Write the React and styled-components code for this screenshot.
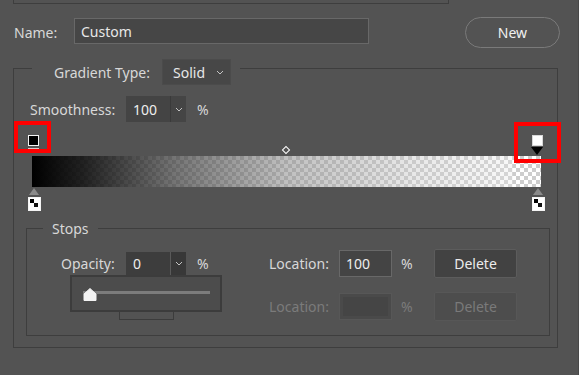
import React from 'react';
import styled, { createGlobalStyle } from 'styled-components';

const GlobalStyle = createGlobalStyle`
  * { box-sizing: border-box; }
  body {
    margin: 0;
    background: #535353;
    font-family: "Noto Sans", "Open Sans", sans-serif;
  }
`;

function Chevron() {
  return (
    <svg width="8" height="5" viewBox="0 0 8 5">
      <polyline points="1,1 4,4 7,1" fill="none" stroke="#c4c4c4" strokeWidth="1" />
    </svg>
  );
}

function NumberCombo({ value, height = 26, active, children }) {
  return (
    <Combo $h={height} $active={active}>
      <ComboValue $active={active}>{value}</ComboValue>
      <ComboArrow $active={active}>
        <Chevron />
      </ComboArrow>
      {children}
    </Combo>
  );
}

export default function App() {
  return (
    <>
      <GlobalStyle />
      <Page>
        <TopStub />
        <NameRow>
          <Label $w={60}>Name:</Label>
          <NameInput readOnly value="Custom" />
          <PillButton>New</PillButton>
        </NameRow>

        <Group>
          <TypeLegend>
            <Label $w={108}>Gradient Type:</Label>
            <Select>
              Solid
              <Chevron />
            </Select>
          </TypeLegend>

          <SmoothRow>
            <Label $w={96}>Smoothness:</Label>
            <NumberCombo value="100" />
            <Unit>%</Unit>
          </SmoothRow>

          <GradientArea>
            <ColorStop $left={-4} $fill="#000" $edge="#f4f4f4" />
            <StopUnderline />
            <ColorStop $left={500} $fill="#fff" $edge="#d8d8d8" />
            <StopPointer />
            <Midpoint />
            <GradientBar />
            <OpacityStop $left={-4} />
            <OpacityStop $left={500} />
            <Highlight $left={-18} $top={-1} $w={37} $h={32} />
            <Highlight $left={482} $top={0} $w={47} $h={41} />
          </GradientArea>

          <StopsGroup>
            <StopsLegend>Stops</StopsLegend>
            <StopsGrid>
              <Label>Opacity:</Label>
              <NumberCombo value="0" height={23} active>
                <SliderPopup>
                  <SliderTrack />
                  <SliderThumb width="14" height="13" viewBox="0 0 14 13">
                    <path d="M7 0.5 L13 6 L13 12.5 L1 12.5 L1 6 Z" fill="#f3f3f3" stroke="#f3f3f3" strokeLinejoin="round" />
                  </SliderThumb>
                </SliderPopup>
              </NumberCombo>
              <Unit>%</Unit>
              <Label>Location:</Label>
              <FieldInput readOnly value="100" />
              <Unit $pad={9}>%</Unit>
              <ActionButton>Delete</ActionButton>

              <Swatch />
              <Label $col={4} $disabled>Location:</Label>
              <FieldInput readOnly value="" disabled />
              <Unit $pad={9} $disabled>%</Unit>
              <ActionButton disabled>Delete</ActionButton>
            </StopsGrid>
          </StopsGroup>
        </Group>
      </Page>
    </>
  );
}

const Page = styled.div`
  width: 579px;
  height: 375px;
  overflow: hidden;
  background: #535353;
  border-right: 1px solid #484848;
  color: #d8d8d8;
  font-size: 14px;
  line-height: 19px;
`;

const TopStub = styled.div`
  margin-left: 13px;
  width: 436px;
  height: 4px;
  border: 1px solid #3e3e3e;
  border-top: none;
`;

const NameRow = styled.div`
  display: flex;
  align-items: center;
  height: 31px;
  margin-top: 13px;
  padding-left: 14px;
`;

const Label = styled.span`
  flex: none;
  grid-column: ${p => (p.$col ? p.$col : 'auto')};
  width: ${p => (p.$w ? `${p.$w}px` : 'auto')};
  color: ${p => (p.$disabled ? '#7b7b7b' : '#d8d8d8')};
  white-space: nowrap;
`;

const NameInput = styled.input`
  align-self: flex-start;
  margin-top: 1px;
  width: 295px;
  height: 26px;
  padding: 0 6px;
  background: #464646;
  border: 1px solid #686868;
  color: #e8e8e8;
  font: inherit;
  outline: none;
`;

const PillButton = styled.button`
  margin-left: auto;
  margin-right: 18px;
  width: 95px;
  height: 31px;
  border: 1px solid #7a7a7a;
  border-radius: 16px;
  background: transparent;
  color: #f0f0f0;
  font: inherit;
  padding: 0;
`;

const Group = styled.fieldset`
  margin: 4px 20px 0 13px;
  padding: 0 0 11px 0;
  min-width: 0;
  border: 1px solid #3e3e3e;
`;

const TypeLegend = styled.legend`
  display: flex;
  align-items: center;
  margin-left: 18px;
  padding: 7px 9px 0 22px;
`;

const Select = styled.div`
  display: flex;
  align-items: center;
  justify-content: space-between;
  width: 69px;
  height: 26px;
  padding: 0 6px 0 10px;
  background: #474747;
  border: 1px solid #4b4b4b;
  color: #e8e8e8;
`;

const SmoothRow = styled.div`
  display: flex;
  align-items: center;
  height: 26px;
  margin: 11px 0 0 16px;
`;

const Combo = styled.div`
  position: relative;
  display: flex;
  height: ${p => p.$h}px;
  width: 60px;
  background: ${p => (p.$active ? '#3d3d3d' : '#444444')};
`;

const ComboValue = styled.div`
  width: 44px;
  padding-left: 7px;
  display: flex;
  align-items: center;
  color: #eeeeee;
`;

const ComboArrow = styled.div`
  width: 16px;
  display: flex;
  align-items: center;
  justify-content: center;
  border-left: 1px solid ${p => (p.$active ? '#5a5a5a' : '#3a3a3a')};
  background: ${p => (p.$active ? '#383838' : '#454545')};
`;

const Unit = styled.span`
  padding-left: ${p => (p.$pad != null ? p.$pad : 11)}px;
  color: ${p => (p.$disabled ? '#7b7b7b' : '#d8d8d8')};
`;

const GradientArea = styled.div`
  position: relative;
  width: 509px;
  margin-left: 18px;
  padding: 34px 0 23px;
`;

const GradientBar = styled.div`
  height: 31px;
  background:
    linear-gradient(
      to right,
      rgba(0, 0, 0, 1) 0%,
      rgba(15, 15, 15, 0.92) 10%,
      rgba(70, 70, 70, 0.75) 28%,
      rgba(140, 140, 140, 0.55) 50%,
      rgba(200, 200, 200, 0.42) 75%,
      rgba(232, 232, 232, 0.3) 94.4%,
      rgba(0, 0, 0, 0) 94.5%
    ),
    repeating-conic-gradient(#ffffff 0 25%, #cdcdcd 0 50%) 0 0 / 8px 8px;
`;

const ColorStop = styled.div`
  position: absolute;
  top: 13px;
  left: ${p => p.$left}px;
  width: 11px;
  height: 11px;
  background: ${p => p.$fill};
  border: 1px solid ${p => p.$edge};
`;

const StopUnderline = styled.div`
  position: absolute;
  top: 26px;
  left: -4px;
  width: 11px;
  height: 1px;
  background: #d6c9c9;
`;

const StopPointer = styled.div`
  position: absolute;
  top: 25px;
  left: 499px;
  width: 0;
  height: 0;
  border-left: 6.5px solid transparent;
  border-right: 6.5px solid transparent;
  border-top: 8px solid #000;
`;

const Midpoint = styled.div`
  position: absolute;
  top: 25px;
  left: 251px;
  width: 6px;
  height: 6px;
  border: 1px solid #ffffff;
  transform: rotate(45deg);
`;

const OpacityStop = styled.div`
  position: absolute;
  top: 66px;
  left: ${p => p.$left}px;
  width: 11px;
  height: 21px;
  &::before {
    content: '';
    display: block;
    width: 0;
    height: 0;
    margin: 0 auto 2px;
    border-left: 5.5px solid transparent;
    border-right: 5.5px solid transparent;
    border-bottom: 7px solid #8a8a8a;
  }
  &::after {
    content: '';
    display: block;
    width: 11px;
    height: 12px;
    border: 1px solid #f4f4f4;
    background:
      linear-gradient(#000, #000) 1px 1px / 4px 4px no-repeat,
      linear-gradient(#111, #111) 5px 5px / 4px 4px no-repeat,
      #ffffff;
  }
`;

const Highlight = styled.div`
  position: absolute;
  z-index: 3;
  left: ${p => p.$left}px;
  top: ${p => p.$top}px;
  width: ${p => p.$w}px;
  height: ${p => p.$h}px;
  border: 4px solid #ff0000;
`;

const StopsGroup = styled.fieldset`
  margin: 9px 7px 0 12px;
  padding: 0;
  min-width: 0;
  border: 1px solid #3e3e3e;
`;

const StopsLegend = styled.legend`
  margin-left: 16px;
  padding: 0 9px;
  color: #d8d8d8;
`;

const StopsGrid = styled.div`
  display: grid;
  grid-template-columns: 65px 60px 83px 70px 53px 42px 83px;
  grid-auto-rows: 29px;
  row-gap: 14px;
  align-items: center;
  padding: 11px 0 14px 34px;
`;

const FieldInput = styled.input`
  width: 53px;
  height: 27px;
  padding: 0 6px;
  background: ${p => (p.disabled ? '#454545' : '#444444')};
  border: 1px solid ${p => (p.disabled ? '#575757' : '#686868')};
  box-shadow: ${p => (p.disabled ? 'inset 0 0 0 3px #4a4a4a' : 'none')};
  color: #eeeeee;
  font: inherit;
  outline: none;
`;

const ActionButton = styled.button`
  width: 83px;
  height: 29px;
  padding: 0;
  border: 1px solid ${p => (p.disabled ? '#575757' : '#5c5c5c')};
  border-radius: 2px;
  background: ${p => (p.disabled ? '#4d4d4d' : '#424242')};
  color: ${p => (p.disabled ? '#7a7a7a' : '#ececec')};
  font: inherit;
`;

const Swatch = styled.div`
  grid-column: 1 / span 2;
  margin-left: 58px;
  width: 55px;
  height: 26px;
  border: 1px solid #3c3c3c;
`;

const SliderPopup = styled.div`
  position: absolute;
  z-index: 2;
  top: 100%;
  left: -56px;
  width: 152px;
  height: 37px;
  background: #4c4c4c;
  border: 2px solid #3c3c3c;
`;

const SliderTrack = styled.div`
  margin: 14px 0 0 11px;
  width: 127px;
  height: 3px;
  background: #7c7c7c;
`;

const SliderThumb = styled.svg`
  position: absolute;
  left: 11px;
  top: 11px;
`;
